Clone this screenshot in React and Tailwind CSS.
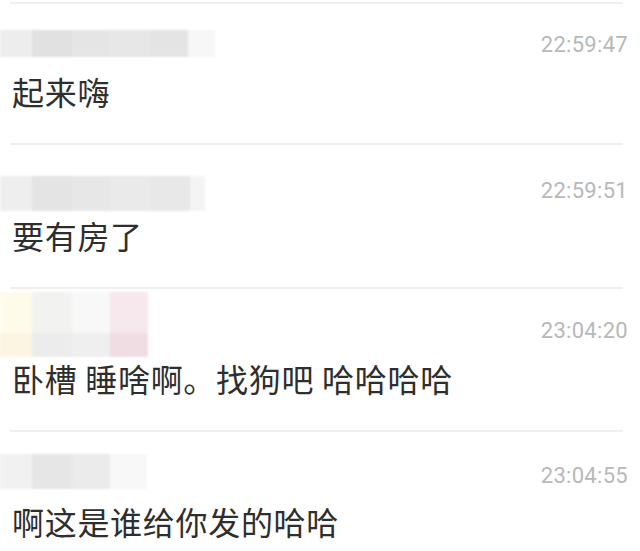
import React from 'react';

// blurred name / avatar blocks, one entry per column
const rows = [
  {
    time: '22:59:47',
    text: '起来嗨',
    blockTop: 'mt-[26px]',
    timeTop: 'mt-[30px]',
    msgTop: 'mt-[14px]',
    cols: [
      { w: 'w-[32px]', cells: [['h-[27px]', 'bg-[#ededed]']] },
      { w: 'w-[40px]', cells: [['h-[27px]', 'bg-[#e1e1e1]']] },
      { w: 'w-[38px]', cells: [['h-[27px]', 'bg-[#e5e5e5]']] },
      { w: 'w-[40px]', cells: [['h-[27px]', 'bg-[#e7e7e7]']] },
      { w: 'w-[38px]', cells: [['h-[27px]', 'bg-[#e4e4e4]']] },
      { w: 'w-[27px]', cells: [['h-[27px]', 'bg-[#f7f7f7]']] },
    ],
  },
  {
    time: '22:59:51',
    text: '要有房了',
    blockTop: 'mt-[31px]',
    timeTop: 'mt-[35px]',
    msgTop: 'mt-[4px]',
    cols: [
      { w: 'w-[32px]', cells: [['h-[35px]', 'bg-[#eeeeee]']] },
      { w: 'w-[40px]', cells: [['h-[35px]', 'bg-[#e4e4e4]']] },
      { w: 'w-[38px]', cells: [['h-[35px]', 'bg-[#e7e7e7]']] },
      { w: 'w-[40px]', cells: [['h-[35px]', 'bg-[#eaeaea]']] },
      { w: 'w-[40px]', cells: [['h-[35px]', 'bg-[#e8e8e8]']] },
      { w: 'w-[15px]', cells: [['h-[35px]', 'bg-[#f4f4f4]']] },
    ],
  },
  {
    time: '23:04:20',
    text: '卧槽 睡啥啊。找狗吧 哈哈哈哈',
    blockTop: 'mt-[3px]',
    timeTop: 'mt-[31px]',
    msgTop: 'mt-[1px]',
    cols: [
      { w: 'w-[32px]', cells: [['h-[41px]', 'bg-[#fffbea]'], ['h-[24px]', 'bg-[#fcf5e2]']] },
      { w: 'w-[40px]', cells: [['h-[41px]', 'bg-[#f2f2f0]'], ['h-[24px]', 'bg-[#ececec]']] },
      { w: 'w-[38px]', cells: [['h-[41px]', 'bg-[#f8f8f8]'], ['h-[24px]', 'bg-[#efefef]']] },
      { w: 'w-[38px]', cells: [['h-[41px]', 'bg-[#f6e8ec]'], ['h-[24px]', 'bg-[#efdde3]']] },
    ],
  },
  {
    time: '23:04:55',
    text: '啊这是谁给你发的哈哈',
    blockTop: 'mt-[22px]',
    timeTop: 'mt-[33px]',
    msgTop: 'mt-[12px]',
    cols: [
      { w: 'w-[32px]', cells: [['h-[35px]', 'bg-[#f1f1f1]']] },
      { w: 'w-[40px]', cells: [['h-[35px]', 'bg-[#e6e6e6]']] },
      { w: 'w-[38px]', cells: [['h-[35px]', 'bg-[#ebebeb]']] },
      { w: 'w-[37px]', cells: [['h-[35px]', 'bg-[#f8f8f8]']] },
    ],
  },
];

const Blocks = ({ cols, top }) => (
  <div className={`flex blur-[1px] ${top}`}>
    {cols.map((col, i) => (
      <div key={i} className={`flex flex-col ${col.w}`}>
        {col.cells.map(([h, bg], j) => (
          <div key={j} className={`${h} ${bg}`} />
        ))}
      </div>
    ))}
  </div>
);

const App = () => {
  return (
    <div className="w-[640px] h-[551px] overflow-hidden bg-white pt-[2px]">
      {rows.map((row) => (
        <div key={row.time} className="flex flex-col pb-[32px]">
          {/* divider */}
          <div className="ml-[10px] w-[613px] h-[2px] bg-[#efefef]" />

          {/* name + time */}
          <div className="flex justify-between items-start">
            <Blocks cols={row.cols} top={row.blockTop} />
            <span
              className={`${row.timeTop} mr-[12px] text-[22px] leading-[22px] tracking-[0.3px] text-[#b8b8b8]`}
              style={{ fontFamily: 'Roboto, "Liberation Sans", sans-serif' }}
            >
              {row.time}
            </span>
          </div>

          {/* message */}
          <p
            className={`${row.msgTop} pl-[12px] text-[32px] leading-[40px] tracking-[0.7px] text-[#2e2e2e] whitespace-pre`}
            style={{ fontFamily: '"Noto Sans CJK SC", "Noto Sans", sans-serif' }}
          >
            {row.text}
          </p>
        </div>
      ))}
    </div>
  );
};

export default App;
